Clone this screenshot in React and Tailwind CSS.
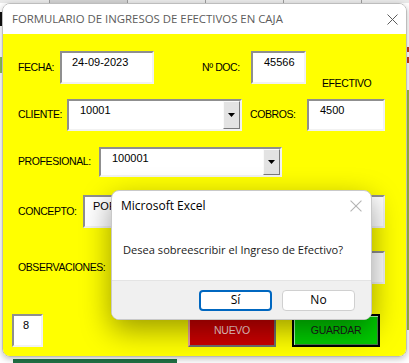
import React from "react";

const formFont = "font-['Liberation_Sans',Arial,sans-serif]";
const uiFont = "font-['Open_Sans','Noto_Sans',sans-serif]";

function Field({ className = "", children, textClass = "pl-[10px]" }) {
  return (
    <div
      className={`bg-white border-2 border-t-[#8f8f8f] border-l-[#8f8f8f] border-b-[#f2f2f2] border-r-[#f2f2f2] text-[11px] leading-[13px] text-black pt-[3px] ${textClass} ${className}`}
    >
      {children}
    </div>
  );
}

function Combo({ className = "", children }) {
  return (
    <div
      className={`flex bg-white border-2 border-t-[#8f8f8f] border-l-[#8f8f8f] border-b-[#f2f2f2] border-r-[#f2f2f2] ${className}`}
    >
      <div className="flex-1 text-[11px] leading-[13px] text-black pt-[3px] pl-[11px]">{children}</div>
      <div className="w-[17px] bg-[#e3e3e3] border border-t-[#fafafa] border-l-[#fafafa] border-b-[#7a7a7a] border-r-[#7a7a7a] flex items-center justify-center">
        <svg width="7" height="4" viewBox="0 0 7 4">
          <path d="M0 0h7L3.5 4z" fill="#000" />
        </svg>
      </div>
    </div>
  );
}

function Label({ className = "", children }) {
  return (
    <div className={`flex items-center text-[10.5px] tracking-[-0.4px] text-black ${className}`}>
      {children}
    </div>
  );
}

function CloseIcon({ color, size = 11 }) {
  return (
    <svg width={size} height={size} viewBox="0 0 11 11">
      <path d="M0.5 0.5l10 10M10.5 0.5l-10 10" stroke={color} strokeWidth="1" />
    </svg>
  );
}

export default function App() {
  return (
    <div className={`relative w-[409px] h-[363px] overflow-hidden bg-white ${formFont}`}>
      {/* excel sheet behind the form */}
      <div className="absolute left-0 top-0 w-[409px] h-[3px] bg-[#e9e9e9] flex">
        <div className="w-[50px] border-r border-[#9c9c9c]" />
        <div className="w-[78px] border-r border-[#9c9c9c] bg-[#d2d2d2]" />
        <div className="w-[78px] border-r border-[#9c9c9c]" />
        <div className="w-[78px] border-r border-[#9c9c9c]" />
        <div className="w-[78px] border-r border-[#9c9c9c]" />
      </div>
      <div className="absolute left-0 top-[12px] w-[3px] h-[14px] bg-[#111]" />
      <div className="absolute left-0 top-[57px] w-[3px] h-[16px] bg-[#8fbf5a]" />
      <div className="absolute right-0 top-[47px] w-[2px] h-[5px] bg-[#c83c1e]" />
      <div className="absolute right-0 top-[57px] w-[2px] h-[6px] bg-[#c83c1e]" />
      <div className="absolute right-0 top-[90px] w-[2px] h-[240px] bg-[#9dba3c]" />
      <div className="absolute left-[13px] bottom-0 w-[164px] h-[4px] bg-[#217346]" />

      {/* form window */}
      <div className="relative ml-[2px] mt-[3px] w-[405px] rounded-[8px] border border-[#bdbdbd] overflow-hidden flex flex-col shadow-[0_2px_6px_rgba(0,0,0,0.25)]">
        <div className="h-[30px] bg-white flex items-center justify-between pl-[9px] pr-[8px]">
          <span className={`${uiFont} text-[11.4px] text-[#5c5c5c]`}>
            FORMULARIO DE INGRESOS DE EFECTIVOS EN CAJA
          </span>
          <CloseIcon color="#5c5c5c" />
        </div>

        <div className="h-[322px] bg-[#ffff00] flex flex-col">
          <div className="flex h-[33px] mt-[17px] pl-[15px]">
            <Label className="w-[42px]">FECHA:</Label>
            <Field className="w-[94px]">24-09-2023</Field>
            <Label className="ml-[48px] w-[49px]">Nº DOC:</Label>
            <Field className="w-[55px]" textClass="pl-[11px]">45566</Field>
            <div className="ml-[16px] self-end mb-[-8px] text-[10.5px] tracking-[-0.4px]">EFECTIVO</div>
          </div>

          <div className="flex h-[32px] mt-[15px] pl-[15px]">
            <Label className="w-[49px]">CLIENTE:</Label>
            <Combo className="w-[175px]">10001</Combo>
            <Label className="ml-[8px] w-[57px]">COBROS:</Label>
            <Field className="w-[78px]" textClass="pl-[11px]">4500</Field>
          </div>

          <div className="flex h-[30px] mt-[16px] pl-[15px]">
            <Label className="w-[81px]">PROFESIONAL:</Label>
            <Combo className="w-[183px]">100001</Combo>
          </div>

          <div className="flex h-[33px] mt-[18px] pl-[15px]">
            <Label className="w-[65px]">CONCEPTO:</Label>
            <Field className="w-[302px]" textClass="pl-[8px]">POR</Field>
          </div>

          <div className="flex h-[33px] mt-[23px] pl-[15px]">
            <Label className="w-[94px]">OBSERVACIONES:</Label>
            <Field className="w-[273px]" />
          </div>

          <div className="flex h-[33px] mt-[30px] pl-[9px]">
            <Field className="w-[31px]" textClass="pl-[9px]">8</Field>
            <button className="ml-[145px] w-[88px] bg-[#cc0000] border-2 border-t-[#e9a0a0] border-l-[#e9a0a0] border-b-[#6e6e6e] border-r-[#6e6e6e] text-[10.5px] tracking-[-0.3px] text-[#ffd6d6]">
              NUEVO
            </button>
            <button className="ml-[16px] w-[88px] bg-[#00cc00] border-2 border-black shadow-[inset_1px_1px_0_#aaffaa,inset_-1px_-1px_0_#4a7a4a] text-[10.5px] tracking-[-0.3px] text-[#1a1a1a]">
              GUARDAR
            </button>
          </div>
        </div>
      </div>

      {/* message box */}
      <div
        className={`absolute left-[111px] top-[190px] w-[261px] h-[130px] rounded-[8px] overflow-hidden bg-white border border-[#c9c9c9] flex flex-col shadow-[0_10px_30px_rgba(0,0,0,0.4)] ${uiFont}`}
      >
        <div className="h-[30px] flex items-center justify-between pl-[9px] pr-[9px]">
          <span className="text-[12px] text-black">Microsoft Excel</span>
          <CloseIcon color="#b4b4b4" size={12} />
        </div>
        <div className="h-[59px] flex items-center pl-[11px] text-[11.1px] text-[#1a1a1a]">
          Desea sobreescribir el Ingreso de Efectivo?
        </div>
        <div className="flex-1 bg-[#f0f0f0] border-t border-[#e4e4e4] flex items-center justify-end gap-[10px] pr-[16px]">
          <button className="w-[73px] h-[21px] rounded-[4px] bg-white border-2 border-[#0067c0] text-[12px] text-black leading-none">
            Sí
          </button>
          <button className="w-[73px] h-[21px] rounded-[4px] bg-white border border-[#d0d0d0] text-[12px] text-black leading-none">
            No
          </button>
        </div>
      </div>
    </div>
  );
}
